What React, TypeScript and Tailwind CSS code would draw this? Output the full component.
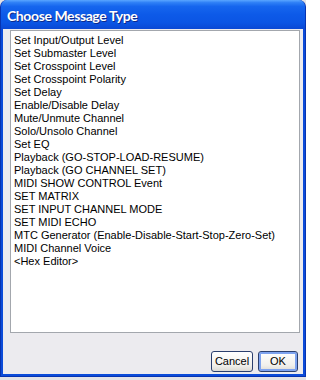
const items = [
  "Set Input/Output Level",
  "Set Submaster Level",
  "Set Crosspoint Level",
  "Set Crosspoint Polarity",
  "Set Delay",
  "Enable/Disable Delay",
  "Mute/Unmute Channel",
  "Solo/Unsolo Channel",
  "Set EQ",
  "Playback (GO-STOP-LOAD-RESUME)",
  "Playback (GO CHANNEL SET)",
  "MIDI SHOW CONTROL Event",
  "SET MATRIX",
  "SET INPUT CHANNEL MODE",
  "SET MIDI ECHO",
  "MTC Generator (Enable-Disable-Start-Stop-Zero-Set)",
  "MIDI Channel Voice",
  "<Hex Editor>",
];

export default function App() {
  return (
    <div className="w-[306px] h-[380px] bg-[#e2e2e6] font-['Liberation_Sans',Arial,sans-serif]">
      <div className="h-[377px] flex flex-col rounded-t-[7px] overflow-hidden bg-[#0b4bd9] border-x border-b border-[#0733b0]">
        <div className="h-[29px] shrink-0 flex items-center pl-[6px] pt-[3px] bg-[linear-gradient(to_bottom,#5aa6ff_0%,#2f80f6_9%,#1666ee_22%,#0d5ae8_50%,#0b55e4_78%,#0a48d4_100%)]">
          <span className="text-white font-bold text-[14px] leading-none tracking-[-0.4px] font-['Lato','Liberation_Sans',sans-serif] [text-shadow:1px_1px_0_#0c2a8c]">
            Choose Message Type
          </span>
        </div>
        <div className="flex-1 mx-[2px] mb-[2px] bg-[#ecebef] flex flex-col pl-[7px] pr-[3px] pt-[1px]">
          <div className="h-[303px] border border-[#a3a7ad] bg-white pl-[3px] pt-[3px] overflow-hidden">
            {items.map((t) => (
              <div key={t} className="text-[11px] leading-[13px] text-black whitespace-nowrap">
                {t}
              </div>
            ))}
          </div>
          <div className="flex justify-end gap-[5px] mt-[18px] pr-[2px]">
            <button className="w-[42px] h-[21px] rounded-[3px] border border-[#2b3f6e] bg-[linear-gradient(to_bottom,#ffffff,#f1f0ec_70%,#dcdad4)] text-[11px] text-black leading-none">
              Cancel
            </button>
            <button className="w-[40px] h-[21px] rounded-[3px] border border-[#2b3f6e] bg-[linear-gradient(to_bottom,#ffffff,#f1f0ec_70%,#dcdad4)] shadow-[inset_0_0_0_2px_#7ea3ef] text-[11px] text-black leading-none">
              OK
            </button>
          </div>
        </div>
      </div>
    </div>
  );
}
